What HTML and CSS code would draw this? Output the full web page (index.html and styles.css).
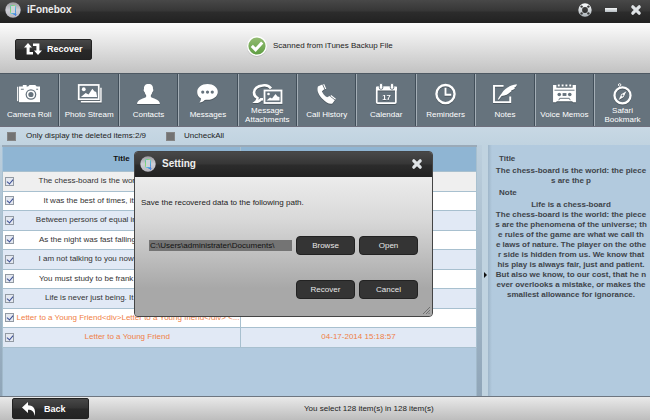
FILE: index.html
```html
<!DOCTYPE html>
<html lang="en">
<head>
<meta charset="utf-8">
<title>iFonebox</title>
<link rel="stylesheet" href="styles.css">
</head>
<body>
<svg width="0" height="0" class="defs" aria-hidden="true">
  <defs>
    <linearGradient id="disc" x1="0" y1="0" x2="0" y2="1"><stop offset="0" stop-color="#9b9b9f"/><stop offset=".5" stop-color="#cfcfd8"/><stop offset="1" stop-color="#b4b4bc"/></linearGradient>
    <linearGradient id="phone" x1="0" y1="0" x2="1" y2="1"><stop offset="0" stop-color="#4fc0b0"/><stop offset=".35" stop-color="#8fd86a"/><stop offset=".6" stop-color="#5cc3d4"/><stop offset="1" stop-color="#4a86e0"/></linearGradient>
    <linearGradient id="steel" x1="0" y1="0" x2="0" y2="1"><stop offset="0" stop-color="#f4f6f7"/><stop offset="1" stop-color="#b4bbc0"/></linearGradient>
    <linearGradient id="green" x1="0" y1="0" x2="0" y2="1"><stop offset="0" stop-color="#93bb72"/><stop offset="1" stop-color="#5f9e43"/></linearGradient>
    <symbol id="logo" viewBox="0 0 16 16"><circle cx="8" cy="8" r="7.7" fill="url(#disc)"/><rect x="5.500" y="3.500" width="5" height="8" rx=".8" fill="#cdd3da" stroke="url(#phone)"/><path d="M8.500 12.500h3M10.500 11v3" fill="none" stroke="#4a86e0"/></symbol>
    <symbol id="cross" viewBox="0 0 12 12"><path d="M2.8 2.8l6.4 6.4M9.2 2.8L2.8 9.2" stroke="#dfe3e6" stroke-width="3.2" stroke-linecap="round"/></symbol>
  </defs>
</svg>
<div class="app">
  <header class="titlebar">
    <svg class="logo"><use href="#logo"/></svg>
    <h1>iFonebox</h1>
    <div class="window-buttons">
      <button type="button" aria-label="Help"><svg width="14" height="14" viewBox="0 0 14 14"><circle cx="7" cy="7" r="4.8" fill="none" stroke="url(#steel)" stroke-width="3.8"/><g fill="#3a3a3a"><circle cx="3.6" cy="3.6" r="1.2"/><circle cx="10.4" cy="3.6" r="1.2"/><circle cx="3.6" cy="10.4" r="1.2"/><circle cx="10.4" cy="10.4" r="1.2"/></g></svg></button>
      <button type="button" aria-label="Minimize"><svg width="12" height="14" viewBox="0 0 12 14"><rect x="0" y="5" width="12" height="4" fill="url(#steel)"/></svg></button>
      <button type="button" aria-label="Close"><svg width="12" height="12"><use href="#cross"/></svg></button>
    </div>
  </header>

  <section class="actions">
    <button type="button" class="dark-button recover"><svg width="18" height="12" viewBox="0 0 18 12"><g fill="#fff"><path d="M4 0L8 4.6H5.6V9H9v2.6H2.6v-7H0z"/><path d="M14 12L10 7.4h2.4V3H9V.4h6.4v7H18z"/></g></svg>Recover</button>
    <p class="status"><svg width="22" height="22" viewBox="0 0 22 22"><circle cx="11" cy="12" r="10" fill="#a9a9a9" opacity=".5"/><circle cx="11" cy="11" r="10" fill="#fff"/><circle cx="11" cy="11" r="8.6" fill="url(#green)"/><path d="M5.8 10.8l3.8 3.9 6.6-7.2" fill="none" stroke="#fff" stroke-width="3.1"/></svg>Scanned from iTunes Backup File</p>
  </section>

  <nav class="tools">
    <a href="#camera"><svg viewBox="0 0 26 22"><g fill="#fff"><path d="M0 3h1.2v15H0zM2 2.600h4V1h4v1.600h1.500L13 1h6l1.500 1.600H24V19H2z"/></g><circle cx="14.500" cy="11" r="5.600" fill="#66737d"/><circle cx="14.500" cy="11" r="4.300" fill="#fff"/><circle cx="14.500" cy="11" r="2.700" fill="#66737d"/><path d="M4 5.500h3M20 5.500h2" stroke="#66737d"/></svg><span>Camera Roll</span></a>
    <a href="#photos"><svg viewBox="0 0 26 22"><path d="M4 18.500h21V4" fill="none" stroke="#fff" stroke-width="1.500"/><rect x="1.700" y="1" width="21" height="15" fill="#66737d" stroke="#fff" stroke-width="1.800"/><circle cx="7" cy="5.500" r="2" fill="#fff"/><path d="M4 13.500l5-4 3 1.500 4-6 2 2.500 2 1 1 5z" fill="#fff"/></svg><span>Photo Stream</span></a>
    <a href="#contacts"><svg viewBox="0 0 26 22"><path d="M13 0c3.600 0 5 2.200 4.700 5.200C18.500 6 18 8 17 8.600c-.3 1.700-1 2.500-1.500 3v2c1.500 1.600 9.300 2 9.500 7.400H1c.2-5.400 8-5.800 9.500-7.400v-2c-.5-.5-1.200-1.300-1.500-3C8 8 7.500 6 8.300 5.200 8 2.200 9.400 0 13 0z" fill="#fff"/></svg><span>Contacts</span></a>
    <a href="#messages"><svg viewBox="0 0 26 22"><path d="M13 0c6 0 10.800 3.600 10.800 8.300S19 16.500 13 16.500c-1 0-2 0-3 .3-1 1.300-3 2.600-5.500 2.700 1.300-1.300 1.800-2.700 1.500-4.500-2.500-1.500-3.800-4-3.800-6.700C2.200 3.600 7 0 13 0z" fill="#fff"/><g fill="#66737d"><circle cx="8" cy="8.500" r="1.700"/><circle cx="13" cy="8.500" r="1.700"/><circle cx="18" cy="8.500" r="1.700"/></g></svg><span>Messages</span></a>
    <a href="#attachments" class="two-line"><svg viewBox="0 0 30 20" class="wide"><path d="M19 4C17 .9 13 .6 10.500 1 5.500 1.400 2 4.500 2 8c0 2.500 1.500 4.500 3.500 5.600 0 1.500-.5 2.800-1.500 3.600 2 0 4-1 5-2.500h2" fill="none" stroke="#fff" stroke-width="2.600"/><rect x="12.500" y="6" width="17" height="12.500" fill="#66737d" stroke="#fff" stroke-width="1.800"/><circle cx="16.500" cy="9.500" r="1.300" fill="#fff"/><path d="M14.500 16l3.500-3 2 1 3.500-4.500 2 2.500 2 .5V16z" fill="#fff"/></svg><span>Message<br>Attachments</span></a>
    <a href="#calls"><svg viewBox="0 0 26 22"><path d="M4 2.500L8.500.5l2.300 5-2.600 2c.8 2.500 3 5 5.500 6.500l2.500-1.500 5.500 4.500-2.500 3.500c-3 1-7-1-10-4.500C5.500 12 2.300 7.500 4 2.500z" fill="#fff"/><path d="M10 .3l2.200 5M17.500 12l5 4" stroke="#fff" stroke-width="1.200"/></svg><span>Call History</span></a>
    <a href="#calendar"><svg viewBox="0 0 26 22"><rect x="2.800" y="3.500" width="20" height="16.500" rx="1" fill="none" stroke="#fff" stroke-width="1.800"/><path d="M2 2.800h22v4H2z" fill="#fff"/><g fill="#fff" stroke="#66737d"><rect x="5.500" y="-.5" width="3.600" height="6" rx="1.500"/><rect x="17" y="-.5" width="3.600" height="6" rx="1.500"/></g><text x="13" y="17" text-anchor="middle" class="day">17</text></svg><span>Calendar</span></a>
    <a href="#reminders"><svg viewBox="0 0 26 22"><circle cx="13" cy="10.500" r="9.500" fill="none" stroke="#fff" stroke-width="2.500"/><path d="M13 4v7.200h6" fill="none" stroke="#fff" stroke-width="2"/></svg><span>Reminders</span></a>
    <a href="#notes"><svg viewBox="0 0 26 22"><path d="M12 2H2v17h17v-6" fill="none" stroke="#fff" stroke-width="2"/><path d="M6 16c1.500-3 2.500-4 4-6C13 5 18 1.500 26 .3c-.2 2-1.500 3-3 3.700l1 .5c-1.300 1.500-3 2-4.300 2.300l.8.600C18 10 14 12.500 10 12.500L7 16.500z" fill="#fff"/></svg><span>Notes</span></a>
    <a href="#memos"><svg viewBox="0 0 26 22"><path d="M1 1h3.500v3h17V1H25v18h-3l-1-1H5l-1 1H1z" fill="#fff"/><path d="M6 1.500h2M10 1.500h2M14 1.500h2M18 1.500h2" stroke="#fff" stroke-width="2"/><path d="M2.500 6.500h21M7 17l1-2h10l1 2" fill="none" stroke="#66737d"/><g fill="#66737d"><circle cx="7.500" cy="11" r="1.900"/><circle cx="18.500" cy="11" r="1.900"/><rect x="11" y="9.500" width="4" height="3"/></g></svg><span>Voice Memos</span></a>
    <a href="#safari" class="two-line"><svg viewBox="0 0 24 22"><circle cx="9" cy="1" r="1.300" fill="none" stroke="#fff"/><circle cx="12" cy="12" r="8.400" fill="none" stroke="#fff" stroke-width="2.400"/><path d="M16 7.500l-2.700 6-5.300 3.300 2.700-6z" fill="#fff"/><circle cx="12" cy="12" r="1" fill="#66737d"/></svg><span>Safari<br>Bookmark</span></a>
  </nav>

  <div class="filters">
    <label><input type="checkbox">Only display the deleted items:2/9</label>
    <label><input type="checkbox">UncheckAll</label>
  </div>

  <main class="content">
    <section class="list">
      <table>
        <colgroup><col class="col-check"><col class="col-title"><col></colgroup>
        <thead><tr><th colspan="2">Title</th><th></th></tr></thead>
        <tbody>
          <tr class="selected"><td><input type="checkbox" checked aria-label="Select item 1"></td><td>The chess-board is the world: the pieces are the p</td><td></td></tr>
          <tr><td><input type="checkbox" checked aria-label="Select item 2"></td><td>It was the best of times, it was the worst of time</td><td></td></tr>
          <tr><td><input type="checkbox" checked aria-label="Select item 3"></td><td>Between persons of equal income there is no social</td><td></td></tr>
          <tr><td><input type="checkbox" checked aria-label="Select item 4"></td><td>As the night was fast falling, we hurried home aga</td><td></td></tr>
          <tr><td><input type="checkbox" checked aria-label="Select item 5"></td><td>I am not talking to you now through the medium of</td><td></td></tr>
          <tr><td><input type="checkbox" checked aria-label="Select item 6"></td><td>You must study to be frank with the world: frankne</td><td></td></tr>
          <tr><td><input type="checkbox" checked aria-label="Select item 7"></td><td>Life is never just being. It is a becoming, a rela</td><td></td></tr>
          <tr class="deleted"><td><input type="checkbox" checked aria-label="Select item 8"></td><td>Letter to a Young Friend&lt;div&gt;Letter to a Young friend&lt;/div&gt; &lt;...</td><td></td></tr>
          <tr class="deleted"><td><input type="checkbox" checked aria-label="Select item 9"></td><td>Letter to a Young Friend</td><td>04-17-2014 15:18:57</td></tr>
        </tbody>
      </table>
    </section>
    <button type="button" class="splitter" aria-label="Collapse details"><svg width="3" height="6" viewBox="0 0 3 6"><path d="M0 0l3 3-3 3z" fill="#111"/></svg></button>
    <aside class="detail">
      <h2>Title</h2>
      <p>The chess-board is the world: the piece<br>s are the p</p>
      <h2>Note</h2>
      <p>Life is a chess-board<br>The chess-board is the world: the piece<br>s are the phenomena of the universe; th<br>e rules of the game are what we call th<br>e laws of nature. The player on the othe<br>r side is hidden from us. We know that<br>his play is always fair, just and patient.<br>But also we know, to our cost, that he n<br>ever overlooks a mistake, or makes the<br>smallest allowance for ignorance.</p>
    </aside>
  </main>

  <footer class="footer">
    <button type="button" class="dark-button back"><svg width="14" height="14" viewBox="0 0 14 14"><path d="M0 5.500L6 0v3.300c5.500.2 8.500 4 6.300 10.700C12.300 9.500 10 7.800 6 7.800V11z" fill="#fff"/></svg>Back</button>
    <p>You select 128 item(s) in 128 item(s)</p>
  </footer>

  <form class="dialog" role="dialog" aria-labelledby="dialog-title">
    <div class="dialog-bar">
      <svg class="logo"><use href="#logo"/></svg>
      <h2 id="dialog-title">Setting</h2>
      <button type="button" aria-label="Close dialog"><svg width="12" height="12"><use href="#cross"/></svg></button>
    </div>
    <div class="dialog-body">
      <label for="path">Save the recovered data to the following path.</label>
      <div class="row">
        <input id="path" type="text" value="C:\Users\administrater\Documents\">
        <button type="button">Browse</button>
        <button type="button">Open</button>
      </div>
      <div class="row">
        <button type="button">Recover</button>
        <button type="button">Cancel</button>
      </div>
    </div>
    <svg class="grip" width="8" height="8" viewBox="0 0 8 8"><path d="M1 8l7-7M4 8l4-4M6.500 8L8 6.500" stroke="#6f6f6f"/></svg>
  </form>
</div>
</body>
</html>
```

FILE: styles.css
```css
* { box-sizing: border-box; }

body {
  margin: 0;
  font: 8px/10px "Liberation Sans", Arial, sans-serif;
  color: #222;
}

h1, h2, p { margin: 0; font-size: inherit; }
button, input { font: inherit; margin: 0; }
button { border: 0; padding: 0; background: none; color: inherit; }
svg { display: block; flex: none; }
.defs { position: absolute; }

.app {
  position: relative;
  display: flex;
  flex-direction: column;
  min-height: 100vh;
  background: linear-gradient(#c8d8e4 127px, #c0d3e0 145px);
}

.titlebar {
  display: flex;
  align-items: center;
  height: 23px;
  padding: 0 8px 3px 5px;
  gap: 6px;
  color: #eee;
  background: linear-gradient(#484848, #363636 48%, #2c2c2c 52%, #222);
}
.titlebar h1, .dialog-bar h2 { font: bold 10px/12px "Liberation Sans", Arial, sans-serif; }
.logo { width: 16px; height: 16px; }
.window-buttons { display: flex; align-items: center; gap: 13px; margin-left: auto; }

.actions {
  display: flex;
  align-items: center;
  height: 50px;
  padding: 2px 15px 0;
  background: linear-gradient(#fcfcfc, #c2c2c2);
}
.dark-button {
  display: flex;
  align-items: center;
  gap: 5px;
  width: 77px;
  height: 21px;
  border: 1px solid #222;
  border-radius: 2px;
  color: #fff;
  font: bold 9px/12px "Liberation Sans", Arial, sans-serif;
  background: linear-gradient(#484848, #343434 48%, #292929 52%, #242424);
}
.recover { padding: 0 8px; }
.back { padding: 0 9px; gap: 8px; }
.status { display: flex; align-items: center; gap: 5px; margin: 0 0 6px 154px; color: #222; }

.tools {
  display: grid;
  grid-template-columns: repeat(10, minmax(0, 17fr)) minmax(0, 16fr);
  height: 54px;
  border-top: 1px solid #4e5963;
  border-bottom: 1px solid #6e6f7c;
  background: #66737d;
}
.tools a {
  display: flex;
  flex-direction: column;
  align-items: center;
  gap: 5px;
  padding-top: 10px;
  border-right: 1px solid #414e59;
  border-left: 1px solid #a4aeb6;
  color: #fff;
  text-align: center;
  text-decoration: none;
  white-space: nowrap;
  line-height: 9px;
}
.tools a:first-child { border-left: 0; }
.tools a:last-child { border-right: 0; }
.tools svg { width: 25px; height: 21px; overflow: visible; filter: drop-shadow(0 1px 0 #4d5860); }
.tools .wide { width: 30px; }
.tools .two-line { gap: 1px; }
.day { font: bold 8px "Liberation Sans", Arial, sans-serif; fill: #fff; }

.filters { display: flex; align-items: center; height: 18px; padding: 0 7px; gap: 20px; }
.filters label { display: flex; align-items: center; gap: 10px; }
.filters label + label { gap: 9px; }
.filters input { appearance: none; width: 9px; height: 9px; background: #737373; border: 1px solid #858585; }

.content { display: flex; flex: 1; }
.list {
  display: flex;
  flex-direction: column;
  flex: 1;
  min-width: 0;
  padding: 0 5px 0 2px;
  background: linear-gradient(#bccfdd, #8fa5b8);
}
.list::after { content: ""; flex: 1; background: #b2cadf; border: 1px solid #a2bacb; border-width: 0 1px; }
.list table {
  width: 100%;
  table-layout: fixed;
  border-collapse: collapse;
}
.col-check { width: 12px; }
.col-title { width: 226px; }
th, td { padding: 0; border: 1px solid #a8c0cf; text-align: center; }
th { height: 25px; background: #8fb5d3; border-top: 2px solid #9aaab8; border-left-color: #a5c3da; color: #111; }
td { height: 20px; background: #fff; overflow: hidden; white-space: nowrap; color: #333; }
td:first-child { border-right: 0; padding-left: 2px; }
td:nth-child(2) { border-left: 0; padding: 0 2px; }
tr:nth-child(even) td { height: 19px; }
tr:nth-child(odd) td { background: #e1e9f5; }
tr.selected td { background: #efefef; }
tr.deleted td { color: #f08045; }
td input {
  appearance: none;
  display: block;
  width: 9px;
  height: 9px;
  border: 1px solid #929aa3;
  background: #e4e8f0;
}
td input:checked::before {
  content: "";
  display: block;
  width: 3px;
  height: 5px;
  margin-left: 2px;
  border: solid #3c4e94;
  border-width: 0 1px 1px 0;
  transform: rotate(40deg);
}

.splitter { display: flex; align-items: center; justify-content: center; width: 6px; background: #c0d3e0; }
.splitter svg { margin-bottom: -8px; }

.detail {
  width: 162px;
  padding: 8px 0 0 4px;
  font-weight: bold;
  color: #3e444a;
  white-space: nowrap;
  background: linear-gradient(90deg, #9fb6c9, #b2cade 4px);
}
.detail h2 { padding: 0 7px; line-height: 12px; }
.detail p { display: flow-root; text-align: center; margin: 1px 0; }

.footer {
  display: flex;
  align-items: center;
  height: 24px;
  padding-left: 12px;
  border-top: 1px solid #6e7680;
  background: linear-gradient(#e9e9e9, #bdbdbd);
}
.footer p { margin-left: 215px; color: #222; }

.dialog {
  position: absolute;
  top: 151px;
  left: 134px;
  width: 299px;
  border: 1px solid #444;
  border-radius: 4px;
  background: #aaa;
  overflow: hidden;
}
.dialog-bar {
  display: flex;
  align-items: center;
  height: 25px;
  padding: 0 9px 2px 5px;
  gap: 6px;
  color: #eee;
  background: linear-gradient(#484848, #363636 48%, #2c2c2c 52%, #222);
}
.dialog-bar button { margin-left: auto; }
.dialog-body {
  padding: 21px 14px 17px;
  background: linear-gradient(#ececec, #d9d9d9 30%, #a8a8a8 80%);
}
.dialog-body label { display: block; margin-left: -8px; }
.dialog .row { display: flex; align-items: center; justify-content: flex-end; gap: 4px; margin-top: 28px; }
.dialog .row + .row { margin-top: 25px; }
.dialog .row input {
  flex: 1;
  min-width: 0;
  height: 11px;
  padding: 0 1px;
  border: 0;
  background: #747474;
  color: #111;
}
.dialog .row button {
  width: 59px;
  height: 19px;
  border: 1px solid #222;
  border-radius: 4px;
  background: #343434;
  color: #e8e8e8;
}
.grip { position: absolute; right: 2px; bottom: 2px; }
```
